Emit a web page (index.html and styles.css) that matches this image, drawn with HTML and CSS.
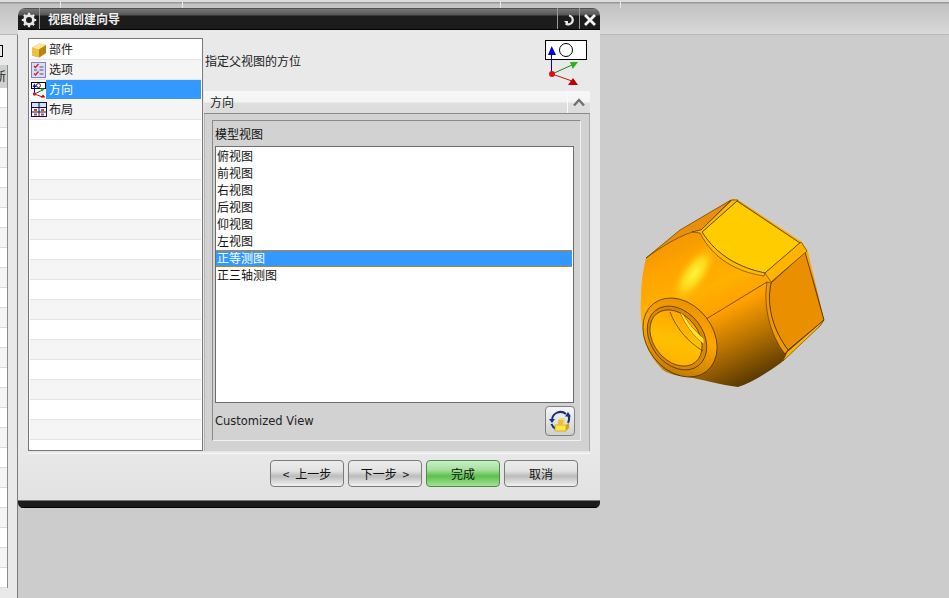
FILE: index.html
```html
<!DOCTYPE html>
<html lang="zh-CN">
<head>
<meta charset="utf-8">
<title>视图创建向导</title>
<link rel="stylesheet" href="styles.css">
</head>
<body>
<div class="app">
  <header class="topbar">
    <i class="tick tick-a"></i><i class="tick tick-b"></i><i class="tick tick-c"></i><i class="tick tick-d"></i>
  </header>
  <main class="workspace">
    <aside class="side">
      <div class="side-box"></div>
      <div class="side-table">
        <div class="side-head">新</div>
        <div class="side-row"></div><div class="side-row alt"></div><div class="side-row"></div><div class="side-row alt"></div>
        <div class="side-row"></div><div class="side-row alt"></div><div class="side-row"></div><div class="side-row alt"></div>
        <div class="side-row"></div><div class="side-row alt"></div><div class="side-row"></div><div class="side-row alt"></div>
        <div class="side-row"></div><div class="side-row alt"></div><div class="side-row"></div><div class="side-row alt"></div>
        <div class="side-row"></div><div class="side-row alt"></div><div class="side-row"></div><div class="side-row alt"></div>
        <div class="side-row"></div><div class="side-row alt"></div><div class="side-row"></div><div class="side-row alt"></div>
        <div class="side-row"></div>
      </div>
    </aside>
    <div class="canvas"></div>
  </main>

  <svg class="model" viewBox="0 0 220 220" width="220" height="220" aria-hidden="true">
    <defs>
      <linearGradient id="cone" gradientUnits="userSpaceOnUse" x1="42" y1="55" x2="112" y2="208">
        <stop offset="0" stop-color="#ee9300"/>
        <stop offset=".2" stop-color="#ffa400"/>
        <stop offset=".4" stop-color="#ffb000"/>
        <stop offset=".56" stop-color="#ffa000"/>
        <stop offset=".78" stop-color="#b47000"/>
        <stop offset="1" stop-color="#5e3c00"/>
      </linearGradient>
      <radialGradient id="shine">
        <stop offset="0" stop-color="#fff640"/>
        <stop offset=".45" stop-color="#ffe020" stop-opacity=".85"/>
        <stop offset="1" stop-color="#ffb000" stop-opacity="0"/>
      </radialGradient>
      <linearGradient id="ring" gradientUnits="userSpaceOnUse" x1="35" y1="125" x2="85" y2="195">
        <stop offset="0" stop-color="#e89000"/>
        <stop offset=".45" stop-color="#ffa800"/>
        <stop offset="1" stop-color="#b87400"/>
      </linearGradient>
      <linearGradient id="hole" gradientUnits="userSpaceOnUse" x1="35" y1="130" x2="80" y2="190">
        <stop offset="0" stop-color="#ff9d00"/>
        <stop offset=".5" stop-color="#ffc000"/>
        <stop offset="1" stop-color="#ffaa00"/>
      </linearGradient>
    </defs>
    <path d="M26 78L60 50 112 19 118 20 182 62 188 72 204 140 200 146 167 174 162 182C148 192 132 203 118 207C100 205 85 200 73 198C60 196 50 195 43 190C33 180 27 170 25 160C21 145 20 130 21 117C21 103 23 90 26 78Z" fill="url(#cone)"/>
    <ellipse cx="74" cy="94" rx="36" ry="15" transform="rotate(-55 74 94)" fill="url(#shine)"/>
    <path d="M26 78L60 50 111 20 81 50 72 52C55 58 40 68 26 78Z" fill="#e8900c" stroke="#2a1c00" stroke-width=".5"/>
    <path d="M82 52L117 21 180 63 145 93C120 88 97 76 82 52Z" fill="#ffcc00" stroke="#2a1c00" stroke-width=".7"/>
    <path d="M72 52L81 50 112 20 118 20 82 52C97 76 120 88 145 93L144 96C118 92 94 80 80 53Z" fill="#ffba00" stroke="#2a1c00" stroke-width=".5"/>
    <path d="M151 103L185 72 204 140 168 170C153 150 146 126 151 103Z" fill="#e98f00" stroke="#2a1c00" stroke-width=".7"/>
    <path d="M147 102L151 103C146 126 153 150 168 170L165 174C150 155 143 126 147 102Z" fill="#f09a00" stroke="#2a1c00" stroke-width=".5"/>
    <path d="M145 93L181 62 187 71 151 102ZM167 172L204 140 200 146 163 181Z" fill="#ffb400" stroke="#2a1c00" stroke-width=".5"/>
    <path d="M78 144L147 102" stroke="#2a1c00" stroke-width=".6" fill="none"/>
    <ellipse cx="60" cy="157.500" rx="43" ry="33" transform="rotate(52 60 157.500)" fill="url(#ring)" stroke="#2a1c00" stroke-width=".6"/>
    <ellipse cx="57" cy="158" rx="35" ry="26" transform="rotate(52 57 158)" fill="#d98700" stroke="#2a1c00" stroke-width=".6"/>
    <ellipse cx="56" cy="158" rx="31" ry="22.500" transform="rotate(52 56 158)" fill="url(#hole)" stroke="#2a1c00" stroke-width=".6"/>
    <path d="M50 132C56 148 68 162 83 171M60 132C66 146 74 156 84 164M64 136C70 146 76 152 83 158" stroke="#2a1c00" stroke-width=".6" fill="none"/>
    <path d="M60 132C66 146 74 156 84 164L83 158C76 152 70 146 64 136Z" fill="#ffe23a"/>
  </svg>

  <section class="dialog" aria-label="视图创建向导">
    <div class="titlebar">
      <span class="title-gear">
        <svg viewBox="0 0 16 16" width="16" height="16" aria-hidden="true"><circle cx="8" cy="8" r="4.400" fill="none" stroke="#e8e8e8" stroke-width="2.800"/><path d="M8 .8v3M8 12.200v3M.8 8h3M12.200 8h3M2.900 2.900l2.100 2.100M11 11l2.100 2.100M13.100 2.900 11 5M5 11l-2.100 2.100" stroke="#e8e8e8" stroke-width="2.200"/></svg>
      </span>
      <span class="title-text">视图创建向导</span>
      <span class="title-btn title-btn-wide">
        <svg viewBox="0 0 14 14" width="14" height="14" aria-hidden="true"><path d="M7 2.500A4.500 4.500 0 1 1 3.500 10.500" fill="none" stroke="#e8e8e8" stroke-width="2.200"/><path d="M2 8h4v4.500z" fill="#e8e8e8"/></svg>
      </span>
      <span class="title-btn">
        <svg viewBox="0 0 14 14" width="14" height="14" aria-hidden="true"><path d="M2 2l10 10M12 2L2 12" stroke="#f2f2f2" stroke-width="2.800"/></svg>
      </span>
    </div>

    <div class="body">
      <div class="columns">
        <ul class="steps">
          <li class="step">
            <svg class="step-icon" viewBox="0 0 16 16" aria-hidden="true"><path d="M1 5.500L8.500 1.500 15 3v8l-7 4.500-7-2z" fill="#e0a020"/><path d="M1 5.500l7 2v8l-7-2z" fill="#f2c040"/><path d="M1 5.500L8.500 1.500 15 3 8 7.500z" fill="#ffe79a"/><path d="M8 7.500L15 3v8l-7 4.500z" fill="#b98414"/></svg>
            <span class="step-label">部件</span>
          </li>
          <li class="step alt">
            <svg class="step-icon" viewBox="0 0 16 16" aria-hidden="true"><rect x=".5" y=".5" width="14" height="15" fill="#dedcf4" stroke="#8480c8"/><path d="M3 4l1.500 1.500L7.500 2M3 11.500L4.500 13 7.500 9.500" stroke="#c02030" fill="none" stroke-width="1.300"/><path d="M8.500 5h4M8.500 8h4M8.500 12h4M3 8h3" stroke="#505080"/></svg>
            <span class="step-label">选项</span>
          </li>
          <li class="step current">
            <svg class="step-icon" viewBox="0 0 16 16" aria-hidden="true"><rect x=".5" y=".5" width="14" height="6" fill="#fff" stroke="#000"/><circle cx="7.500" cy="3.500" r="2" fill="none" stroke="#000" stroke-width=".8"/><path d="M3.500 12V2.500" stroke="#0000c0"/><path d="M1.500 5L3.500 1.500 5.500 5z" fill="#0000d0"/><path d="M3.500 12l8-4" stroke="#108010"/><path d="M9 6.500h5l-2.500 3z" fill="#30b020"/><path d="M3.500 12l8 3" stroke="#c01010"/><path d="M9.500 15.500l2.500-3 2.500 3z" fill="#c00000"/><circle cx="3.500" cy="12" r="1.700" fill="#e01010"/></svg>
            <span class="step-label">方向</span>
          </li>
          <li class="step alt">
            <svg class="step-icon" viewBox="0 0 16 16" aria-hidden="true"><rect x=".5" y=".5" width="15" height="14" fill="#fff" stroke="#101040"/><path d="M1 1h14v4H1z" fill="#d4e2f6"/><path d="M.5 5.500h15M.5 10h15M8 .5v14" stroke="#101040"/><path d="M3 7h3v2H3zM10 7h3v2h-3zM3 11.500h3v2H3zM10 11.500h3v2h-3z" fill="#c04060"/></svg>
            <span class="step-label">布局</span>
          </li>
          <li class="step"></li><li class="step alt"></li><li class="step"></li><li class="step alt"></li>
          <li class="step"></li><li class="step alt"></li><li class="step"></li><li class="step alt"></li>
          <li class="step"></li><li class="step alt"></li><li class="step"></li><li class="step alt"></li>
          <li class="step"></li><li class="step alt"></li><li class="step"></li><li class="step alt"></li>
          <li class="step"></li><li class="step alt"></li><li class="step"></li><li class="step alt"></li>
        </ul>

        <div class="detail">
          <div class="prompt">
            <span class="prompt-text">指定父视图的方位</span>
            <svg class="prompt-icon" viewBox="0 0 44 46" width="44" height="46" aria-hidden="true">
              <rect x=".5" y=".5" width="41" height="19" fill="#fff" stroke="#000"/>
              <circle cx="21" cy="10" r="6.500" fill="none" stroke="#000"/>
              <path d="M6.500 34V14" stroke="#0000c0"/>
              <path d="M3 15L6.700 6 11 15z" fill="#0000e0"/>
              <path d="M7 34l20-9" stroke="#108a10"/>
              <path d="M25 22h8l-5.300 7z" fill="#30b020"/>
              <path d="M7 34l20 7" stroke="#c81010"/>
              <path d="M23 45l5-7 5 7z" fill="#c00000"/>
              <circle cx="7" cy="34" r="3" fill="#e01010"/>
            </svg>
          </div>
          <div class="panel">
            <div class="panel-head">
              <span class="panel-title">方向</span>
              <span class="panel-toggle">
                <svg viewBox="0 0 12 8" width="12" height="8" aria-hidden="true"><path d="M1 7.500L6 2l5 5.500" fill="none" stroke="#707070" stroke-width="2.400"/></svg>
              </span>
            </div>
            <div class="panel-body">
              <div class="group">
                <div class="group-title">模型视图</div>
                <ul class="views">
                  <li>俯视图</li>
                  <li>前视图</li>
                  <li>右视图</li>
                  <li>后视图</li>
                  <li>仰视图</li>
                  <li>左视图</li>
                  <li class="selected">正等测图</li>
                  <li>正三轴测图</li>
                </ul>
                <div class="custom">
                  <span class="custom-label">Customized View</span>
                  <button class="custom-btn" type="button" aria-label="Customized View">
                    <svg viewBox="0 0 24 24" width="24" height="24" aria-hidden="true">
                      <path d="M4 11A8.500 8.500 0 0 1 18 5" fill="none" stroke="#18307c" stroke-width="2"/>
                      <path d="M3.500 15A8.500 8.500 0 0 0 8 20" fill="none" stroke="#18307c" stroke-width="2"/>
                      <path d="M20.500 6.500A8.500 8.500 0 0 1 20 14" fill="none" stroke="#18307c" stroke-width="2"/>
                      <path d="M1 10h6l-3 4zM17 7.500h6L20 3z" fill="#18307c"/>
                      <path d="M7 16h11v6H7z" fill="#ffe53a" stroke="#b89a10" stroke-width=".6"/>
                      <path d="M18 16l3-2.500v5.500L18 22z" fill="#c8a818"/>
                      <path d="M10 11l2.500-2H17v5l-2 2h-5z" fill="#f0d878"/>
                      <path d="M10 11h5v5h-5z" fill="#e8c040"/>
                    </svg>
                  </button>
                </div>
              </div>
            </div>
          </div>
        </div>
      </div>
      <footer class="actions">
        <button class="btn" type="button">&lt; 上一步</button>
        <button class="btn" type="button">下一步 &gt;</button>
        <button class="btn primary" type="button">完成</button>
        <button class="btn" type="button">取消</button>
      </footer>
    </div>
    <div class="bottombar"></div>
  </section>
</div>
</body>
</html>
```

FILE: styles.css
```css
* { box-sizing: border-box; }
html, body { margin: 0; padding: 0; height: 100%; overflow: hidden; }
body {
  font-family: "Noto Sans CJK SC", "Noto Sans", sans-serif;
  font-size: 12px;
  color: #111;
  background: #cccccc;
}
ul { list-style: none; margin: 0; padding: 0; }

.app { position: relative; width: 949px; height: 598px; display: flex; flex-direction: column; }

/* background window chrome */
.topbar {
  position: relative;
  height: 35px;
  flex: none;
  border-top: 2px solid #dcdcdc;
  border-bottom: 1px solid #b8b8b8;
  background: linear-gradient(#999 0, #999 1px, #c2c2c2 2px, #d9d9d9 100%);
}
.tick { position: absolute; top: 0; width: 1px; height: 6px; background: #e8e8e8; }
.tick-a { left: 60px; }
.tick-b { left: 182px; }
.tick-c { left: 500px; }
.tick-d { left: 620px; }

.workspace { flex: 1; display: flex; min-height: 0; }
.side {
  width: 18px;
  flex: none;
  padding-top: 10px;
  background: #e9e9e9;
  border-right: 1px solid #7c7c7c;
  overflow: hidden;
}
.side-box { width: 3px; height: 12px; margin-bottom: 8px; border: 1px solid #000; border-left: 0; }
.side-table { width: 8px; border-right: 1px solid #8a8a8a; overflow: hidden; }
.side-head { height: 23px; line-height: 22px; background: #cfcfcf; text-indent: -6px; white-space: nowrap; color: #222; }
.side-row { height: 20px; background: #fff; border-bottom: 1px solid #dcdcdc; }
.side-row.alt { background: #f5f5f5; }
.canvas { flex: 1; background: #cccccc; }

.model { position: absolute; left: 620px; top: 180px; }

/* dialog */
.dialog {
  position: absolute;
  left: 18px;
  top: 8px;
  width: 582px;
  height: 500px;
  display: flex;
  flex-direction: column;
  border-radius: 7px 7px 5px 5px;
  overflow: hidden;
  background: #e9e9e9;
}
.titlebar {
  height: 22px;
  flex: none;
  display: flex;
  align-items: stretch;
  color: #f0f0f0;
  background: linear-gradient(#2a2a2a 0, #777 1px, #555 7px, #1c1c1c 8px, #1c1c1c 100%);
  border-bottom: 1px solid #000;
}
.title-gear {
  width: 22px;
  flex: none;
  display: flex;
  align-items: center;
  justify-content: center;
  padding: 2px 0 0 1px;
  border-right: 1px solid #9a9a9a;
}
.title-text { flex: 1; padding-left: 8px; line-height: 22px; font-size: 12px; font-weight: 700; }
.title-btn {
  width: 21px;
  flex: none;
  display: flex;
  align-items: center;
  justify-content: center;
  padding-top: 2px;
  border-left: 1px solid #9a9a9a;
}
.title-btn-wide { width: 22px; }

.body {
  flex: 1;
  min-height: 0;
  display: flex;
  flex-direction: column;
  padding: 8px 10px 0 10px;
  background: linear-gradient(#e9e9e9 0, #e9e9e9 88%, #e2e2e2 100%);
}
.columns { height: 413px; flex: none; display: flex; gap: 1px; }

.steps {
  width: 175px;
  flex: none;
  height: 413px;
  padding: 1px;
  overflow: hidden;
  background: #fff;
  border: 1px solid #777;
}
.step {
  height: 20px;
  display: flex;
  align-items: center;
  gap: 2px;
  padding-left: 1px;
  background: #fff;
  border-bottom: 1px solid #e4e4e4;
  color: #222;
  font-size: 12px;
}
.step.alt { background: #f5f5f5; }
.step.current { border-bottom-color: #fff; }
.step-icon { width: 16px; height: 16px; flex: none; }
.step-label { flex: 1; height: 19px; line-height: 17px; padding-left: 3px; margin-left: -3px; }
.step.current .step-label { background: #3399ff; color: #fff; }

.detail { flex: 1; min-width: 0; display: flex; flex-direction: column; }
.prompt { height: 53px; flex: none; display: flex; align-items: flex-start; justify-content: space-between; padding: 2px 1px 0 1px; }
.prompt-text { padding-top: 12px; line-height: 18px; font-size: 12px; color: #222; }

.panel { flex: 1; min-height: 0; display: flex; flex-direction: column; background: #d2d2d2; }
.panel-head {
  height: 23px;
  flex: none;
  display: flex;
  align-items: center;
  justify-content: space-between;
  background: linear-gradient(#f6f7f7 0, #f3f4f4 50%, #dfdfdf 55%, #dcdcdc 100%);
  border-bottom: 1px solid #8a8a8a;
}
.panel-title { padding: 0 0 2px 6px; color: #222; }
.panel-toggle {
  width: 23px;
  height: 100%;
  display: flex;
  align-items: center;
  justify-content: center;
  border-left: 1px solid #fafafa;
}
.panel-body { flex: 1; min-height: 0; padding: 6px 8px 10px 7px; border-right: 1px solid #a8a8a8; border-left: 1px solid #b8b8b8; }
.group {
  height: 100%;
  display: flex;
  flex-direction: column;
  padding: 0 6px 0 2px;
  border: 1px solid #f1f1f1;
  border-top-color: #8a8a8a;
  border-left-color: #8a8a8a;
}
.group-title { height: 25px; flex: none; line-height: 26px; color: #111; }
.views {
  height: 257px;
  flex: none;
  padding: 1px 1px 1px 0;
  background: #fff;
  border: 1px solid #6c6c6c;
}
.views li { height: 17px; line-height: 16px; padding-left: 1px; color: #111; white-space: nowrap; }
.views .selected { background: #3399ff; color: #fff; border-top: 1px solid #c87f1e; border-bottom: 1px solid #c87f1e; line-height: 14px; }
.custom { flex: 1; display: flex; align-items: center; justify-content: space-between; padding-bottom: 2px; margin-right: -1px; }
.custom-label { font-family: "DejaVu Sans", sans-serif; font-size: 11.5px; color: #222; }
.custom-btn {
  width: 30px;
  height: 30px;
  padding: 0;
  display: flex;
  align-items: center;
  justify-content: center;
  background: linear-gradient(#f6f6f6, #cfcfcf);
  border: 1px solid #808080;
  border-radius: 4px;
}

.actions {
  flex: 1;
  display: flex;
  justify-content: flex-end;
  align-items: flex-start;
  gap: 4px;
  padding: 6px 12px 0 0;
  margin-top: 2px;
  border-top: 1px solid #f8f8f8;
}
.btn {
  width: 74px;
  height: 27px;
  padding: 0;
  font: inherit;
  word-spacing: 3px;
  color: #111;
  border: 1px solid #7a7a7a;
  border-radius: 4px;
  background: linear-gradient(#ececec 0, #e2e2e2 40%, #bcbcbc 60%, #f2f2f2 100%);
}
.btn.primary {
  border-color: #4d8a4d;
  background: linear-gradient(#c8eec8 0, #a8e0a0 35%, #5cc04c 60%, #a4e294 100%);
}
.bottombar {
  height: 8px;
  flex: none;
  background: #1c1c1c;
  border-top: 1px solid #777;
  border-bottom: 1px solid #000;
}
```
